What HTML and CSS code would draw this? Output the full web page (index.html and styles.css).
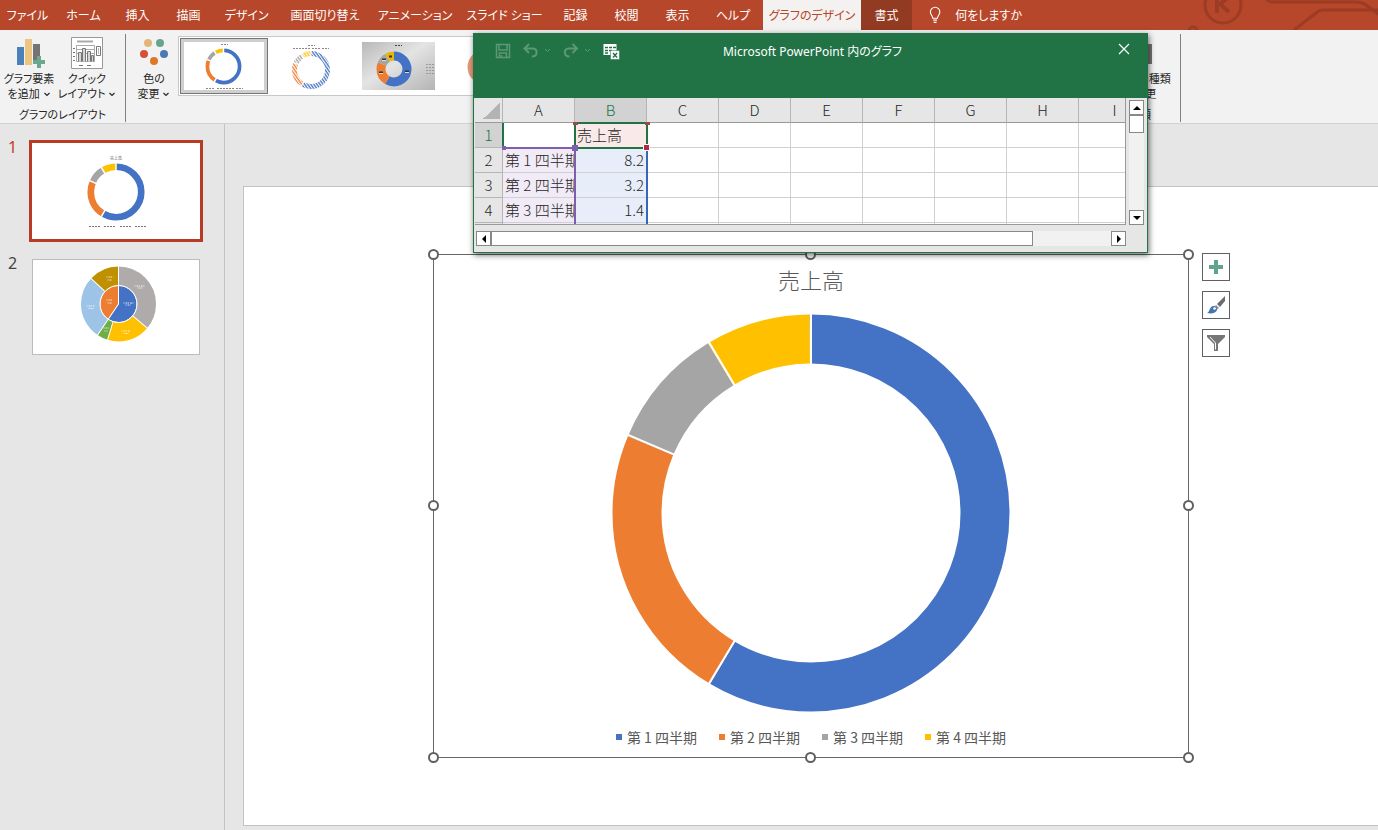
FILE: index.html
```html
<!DOCTYPE html>
<html lang="ja">
<head>
  <meta charset="UTF-8">
  <title>グラフのデザイン</title>
  <link rel="stylesheet" href="styles.css">
</head>
<body>
  <!-- shared drawings -->
  <svg class="defs" aria-hidden="true">
    <symbol id="ring" viewBox="-100 -100 200 200" overflow="visible">
      <g fill="none" transform="rotate(-90)">
        <circle r="87" pathLength="140" stroke="#4472c4" stroke-dasharray="82 58"/>
        <circle r="87" pathLength="140" stroke="#ed7d31" stroke-dasharray="32 108" stroke-dashoffset="-82"/>
        <circle r="87" pathLength="140" stroke="#a5a5a5" stroke-dasharray="14 126" stroke-dashoffset="-114"/>
        <circle r="87" pathLength="140" stroke="#ffc000" stroke-dasharray="12 128" stroke-dashoffset="-128"/>
      </g>
    </symbol>
    <symbol id="cuts" viewBox="-100 -100 200 200" overflow="visible">
      <g stroke="#fff">
        <path d="M0-60V-102"/>
        <path d="M0-60V-102" transform="rotate(210.86)"/>
        <path d="M0-60V-102" transform="rotate(293.14)"/>
        <path d="M0-60V-102" transform="rotate(329.14)"/>
      </g>
    </symbol>
    <symbol id="down" viewBox="0 0 8 8"><path d="M1.500 3L4 5.500 6.500 3" fill="none" stroke="currentColor" stroke-width="1.2"/></symbol>
    <pattern id="hatch" width="2.500" height="2.500" patternUnits="userSpaceOnUse" patternTransform="rotate(-35)">
      <path d="M1 0V3" stroke="#fff" stroke-width="1.3"/>
    </pattern>
    <mask id="hatch-mask"><rect width="88" height="56" fill="url(#hatch)"/></mask>
    <linearGradient id="shade" x1="0" y1="0" x2="1" y2="1">
      <stop offset="0" stop-color="#b8b8b8"/><stop offset=".45" stop-color="#e4e4e4"/><stop offset="1" stop-color="#b4b4b4"/>
    </linearGradient>
  </svg>

  <div class="app">
    <nav class="tabs">
      <button>ファイル</button>
      <button>ホーム</button>
      <button>挿入</button>
      <button>描画</button>
      <button>デザイン</button>
      <button>画面切り替え</button>
      <button>アニメーション</button>
      <button>スライド ショー</button>
      <button>記録</button>
      <button>校閲</button>
      <button>表示</button>
      <button>ヘルプ</button>
      <button class="active">グラフのデザイン</button>
      <button class="context">書式</button>
      <button class="tell-me">
        <svg width="13" height="18" viewBox="0 0 13 18" fill="none" stroke="#fff" stroke-width="1.2"><path d="M4 12.500C4 10 1.500 9 1.500 5.800a5 5 0 0 1 10 0C11.500 9 9 10 9 12.500zM4.500 14.500h4M5 16.800h3"/></svg>
        何をしますか
      </button>
      <svg class="tabs-art" width="198" height="30" viewBox="0 0 198 30" fill="none" stroke="#9c3c24" stroke-width="3">
        <circle cx="43" cy="5" r="18"/>
        <path d="M37-2v15M49-3L40 4l9 8" stroke-width="4"/>
        <path d="M86-4c0 4 3 6 6 6h84q6 0 10 3l14 10M114 30l22-17q3-3 7-3h60M90 27M9 32c0-7 8-7 8 0"/>
      </svg>
    </nav>

    <header class="ribbon">
      <section class="group">
        <div class="tools">
          <button class="big">
            <svg width="32" height="34" viewBox="0 0 32 34"><path d="M4 11h7v18H4z" fill="#4c80b9"/><path d="M12 3h7v26h-7z" fill="#ecc680"/><path d="M20 8h7v14h-3v4h-4z" fill="#747474"/><path d="M24 20h4v4h4v4h-4v4h-4v-4h-4v-4h4z" fill="#6aa990"/></svg>
            <span>グラフ要素<br>を追加 <svg width="8" height="8"><use href="#down"/></svg></span>
          </button>
          <button class="big">
            <svg width="32" height="34" viewBox="0 0 32 34" fill="none" stroke="#777"><path d="M.5 1.500h31v31H.5z" fill="#fff" stroke="#999"/><path d="M6 5.500h16" stroke-width="2" stroke="#aaa"/><path d="M5.500 9.500h18v16h-18zM5.500 13.500h18M5.500 17.500h18" stroke="#aaa"/><path d="M2 12.500h2M2 16.500h2M2 20.500h2M2 24.500h2M8 29.500h4M16 29.500h4"/><path d="M7.500 25.500v-9h3v9M11.500 25.500v-13h3v13M16.500 25.500v-10h3v10M20.500 25.500v-6h2v6" fill="#d5d5d5"/><path d="M25.500 10.500h4v9h-4zM27 13h1M27 15h1M27 17h1"/></svg>
            <span>クイック<br>レイアウト <svg width="8" height="8"><use href="#down"/></svg></span>
          </button>
        </div>
        <div class="group-name">グラフのレイアウト</div>
      </section>
      <section class="group styles">
        <button class="big">
          <svg width="32" height="34" viewBox="0 0 32 34"><circle cx="10" cy="7" r="4" fill="#e4b676"/><circle cx="22" cy="7" r="4" fill="#66a48c"/><circle cx="6" cy="18" r="4" fill="#d4503b"/><circle cx="26" cy="18" r="4" fill="#4c78b5"/><circle cx="16" cy="25" r="4" fill="#dc7927"/></svg>
          <span>色の<br>変更 <svg width="8" height="8"><use href="#down"/></svg></span>
        </button>
        <div class="gallery">
          <button class="selected" aria-label="スタイル 1">
            <svg width="88" height="56" viewBox="0 0 88 56"><rect width="88" height="56" fill="#fff"/><use href="#ring" x="25" y="10" width="37" height="37" stroke-width="20"/><use href="#cuts" x="25" y="10" width="37" height="37" stroke-width="8"/><path d="M41 6.500h7M26 50.500h8M37 50.500h8M46 50.500h8M56 50.500h7" stroke="#888" stroke-dasharray="2 1"/></svg>
          </button>
          <button aria-label="スタイル 2">
            <svg width="88" height="56" viewBox="0 0 88 56"><g mask="url(#hatch-mask)"><use href="#ring" x="24" y="13" width="38" height="38" stroke-width="26"/></g><use href="#cuts" x="24" y="13" width="38" height="38" stroke-width="6"/><path d="M40 7.500h7M25 10.500h8M34 10.500h8M44 10.500h8M54 10.500h7" stroke="#888" stroke-dasharray="2 1"/></svg>
          </button>
          <button aria-label="スタイル 3">
            <svg width="88" height="56" viewBox="0 0 88 56"><rect x="6" y="4" width="73" height="48" fill="url(#shade)"/><g transform="translate(38 31)" fill="none"><g transform="rotate(-90)" stroke-width="9"><circle r="13" pathLength="140" stroke="#4472c4" stroke-dasharray="82 58"/><circle r="13" pathLength="140" stroke="#ed7d31" stroke-dasharray="32 108" stroke-dashoffset="-82"/><circle r="13" pathLength="140" stroke="#a5a5a5" stroke-dasharray="14 126" stroke-dashoffset="-114"/><circle r="13" pathLength="140" stroke="#e8b50a" stroke-dasharray="12 128" stroke-dashoffset="-128"/></g></g><path d="M39 7.500h7" stroke="#444" stroke-dasharray="2 1"/><path d="M23 34.500h4M26 21.500h4M33 18.500h3M49 33.500h4" stroke="#333" stroke-width="2"/><path d="M23 35.500h4M26 22.500h4M49 34.500h4" stroke="#ddd"/><path d="M70 26.500h8M70 29.500h8M70 32.500h8M70 35.500h8" stroke="#999" stroke-dasharray="2 1"/></svg>
          </button>
          <button aria-label="スタイル 4">
            <svg width="88" height="56" viewBox="0 0 88 56"><circle cx="41" cy="29" r="13" fill="none" stroke="#e59a76" stroke-width="9"/></svg>
          </button>
        </div>
      </section>
      <section class="group">
        <button class="big">
          <svg width="32" height="34" viewBox="0 0 32 34"><path d="M2 11h7v18H2z" fill="#4c80b9"/><path d="M10 3h7v26h-7z" fill="#ecc680"/><path d="M18 8h10v20H18z" fill="#747474"/></svg>
          <span>グラフの種類<br>の変更</span>
        </button>
        <div class="group-name">種類</div>
      </section>
    </header>

    <div class="workspace">
      <ol class="slides">
        <li class="current">
          <span class="num">1</span>
          <svg class="thumb" viewBox="0 0 168 96">
            <text x="84" y="17" font-size="4" text-anchor="middle" fill="#595959">売上高</text>
            <use href="#ring" x="55" y="20" width="58" height="58" stroke-width="23"/>
            <use href="#cuts" x="55" y="20" width="58" height="58" stroke-width="5"/>
            <path d="M57 83.500h11M72 83.500h11M88 83.500h11M103 83.500h11" stroke="#777" stroke-dasharray="2 1"/>
          </svg>
        </li>
        <li>
          <span class="num">2</span>
          <svg class="thumb" viewBox="0 0 168 96">
            <g transform="translate(86.500 45)">
              <g fill="none" transform="rotate(-90)">
                <g stroke-width="19">
                  <circle r="28" pathLength="360" stroke="#afabab" stroke-dasharray="130 230"/>
                  <circle r="28" pathLength="360" stroke="#ffc000" stroke-dasharray="67 293" stroke-dashoffset="-130"/>
                  <circle r="28" pathLength="360" stroke="#70ad47" stroke-dasharray="17 343" stroke-dashoffset="-197"/>
                  <circle r="28" pathLength="360" stroke="#9dc3e6" stroke-dasharray="99 261" stroke-dashoffset="-214"/>
                  <circle r="28" pathLength="360" stroke="#bf9000" stroke-dasharray="47 313" stroke-dashoffset="-313"/>
                </g>
                <g stroke-width="18">
                  <circle r="9" pathLength="360" stroke="#4472c4" stroke-dasharray="214 146"/>
                  <circle r="9" pathLength="360" stroke="#ed7d31" stroke-dasharray="146 214" stroke-dashoffset="-214"/>
                </g>
                <circle r="18.500" stroke="#fff"/>
                <path d="M0 0H38" stroke="#fff"/>
                <path d="M19 0H38" stroke="#fff" transform="rotate(130)"/>
                <path d="M19 0H38" stroke="#fff" transform="rotate(197)"/>
                <path d="M0 0H38" stroke="#fff" transform="rotate(214)"/>
                <path d="M19 0H38" stroke="#fff" transform="rotate(313)"/>
              </g>
              <path d="M16-18h10M19-16h5M5-1h10M7 1h5M-12-4h6M-11-1h4M-12-27h7M-11-24h4M-32 2h8M-30 4.500h5M3 27h9M5 29.500h5M-15 24h5M-14 27h3" stroke="#fff" stroke-dasharray="1 1 2 .5" opacity=".8"/>
            </g>
          </svg>
        </li>
      </ol>

      <main class="stage">
        <div class="slide">
          <div class="chart">
            <h1>売上高</h1>
            <svg class="donut" viewBox="-200 -200 400 400" role="img" aria-label="売上高">
              <use href="#ring" x="-200" y="-200" width="400" height="400" stroke-width="24.500"/>
              <use href="#cuts" x="-200" y="-200" width="400" height="400" stroke-width="1"/>
            </svg>
            <ul class="legend">
              <li class="q1">第 1 四半期</li>
              <li class="q2">第 2 四半期</li>
              <li class="q3">第 3 四半期</li>
              <li class="q4">第 4 四半期</li>
            </ul>
            <i class="handle top left"></i>
            <i class="handle top center"></i>
            <i class="handle top right"></i>
            <i class="handle middle left"></i>
            <i class="handle middle right"></i>
            <i class="handle bottom left"></i>
            <i class="handle bottom center"></i>
            <i class="handle bottom right"></i>
            <div class="chart-tools">
              <button aria-label="グラフ要素">
                <svg width="20" height="20" viewBox="0 0 20 20"><path d="M8 3h4v5h5v4h-5v5H8v-5H3V8h5z" fill="#5ea58b"/></svg>
              </button>
              <button aria-label="グラフ スタイル">
                <svg width="20" height="20" viewBox="0 0 20 20"><path d="M19 1v5l-5 6-3-3z" fill="#6b6b6b"/><path d="M10 10l3 3-1 1-3-3z" fill="#8a8a8a"/><path d="M1 18c3-1 2-6 6-7 3-.5 5 2 4 4-1 3-5 4-10 3z" fill="#4777ad"/><path d="M7 13c1-1 3-1 3 1l-2 1z" fill="#fff"/></svg>
              </button>
              <button aria-label="グラフ フィルター">
                <svg width="20" height="20" viewBox="0 0 20 20"><path d="M1 2h18v2l-7 7v7H8v-7L1 4z" fill="#777"/><path d="M4 4l5.500 6v6.500" fill="none" stroke="#fff"/></svg>
              </button>
            </div>
          </div>
        </div>
      </main>
    </div>
  </div>

  <div class="window">
    <div class="titlebar">
      <div class="quick">
        <svg width="16" height="16" viewBox="0 0 16 16" fill="none" stroke="#5c9876" stroke-width="1.500"><path d="M1.500 1.500h13v13h-13zM4 2v5h8V2M4.500 14v-4h7v4M6.500 14v-2"/></svg>
        <svg width="28" height="16" viewBox="0 0 28 16" fill="none" stroke="#5c9876"><path d="M6 1L1.500 5.500 6 10M2 5.500h8c5 0 5 8-1 8" stroke-width="2"/><path d="M22 6l2.500 2.500L27 6"/></svg>
        <svg width="28" height="16" viewBox="0 0 28 16" fill="none" stroke="#5c9876"><path d="M9.500 1L14 5.500 9.500 10M13.500 5.500h-8c-5 0-5 8 1 8" stroke-width="2"/><path d="M22 6l2.500 2.500L27 6"/></svg>
        <svg width="17" height="17" viewBox="0 0 17 17"><path d="M.5 1h13v11H.5z" fill="#fff"/><path d="M2 4.500h3M6 4.500h3M10 4.500h3M2 7.500h3M6 7.500h3M2 10h3" stroke="#217346" stroke-width="1.500"/><path d="M7.500 7.500h9v9h-9z" fill="#fff" stroke="#217346" stroke-width=".5"/><path d="M10 10l4 4.500M14 10l-4 4.500" stroke="#217346" stroke-width="1.400"/></svg>
      </div>
      <h2>Microsoft PowerPoint 内のグラフ</h2>
      <button class="close" aria-label="閉じる">
        <svg width="12" height="12" viewBox="0 0 12 12"><path d="M1 1l10 10M11 1L1 11" stroke="#fff" stroke-width="1.200"/></svg>
      </button>
    </div>

    <div class="sheet">
      <div class="cells">
        <table>
          <thead>
            <tr><th class="corner"></th><th>A</th><th class="on">B</th><th>C</th><th>D</th><th>E</th><th>F</th><th>G</th><th>H</th><th>I</th></tr>
          </thead>
          <tbody>
            <tr><th class="on">1</th><td></td><td class="name">売上高</td><td></td><td></td><td></td><td></td><td></td><td></td><td></td></tr>
            <tr><th>2</th><td class="cat">第 1 四半期</td><td class="val">8.2</td><td></td><td></td><td></td><td></td><td></td><td></td><td></td></tr>
            <tr><th>3</th><td class="cat">第 2 四半期</td><td class="val">3.2</td><td></td><td></td><td></td><td></td><td></td><td></td><td></td></tr>
            <tr><th>4</th><td class="cat">第 3 四半期</td><td class="val">1.4</td><td></td><td></td><td></td><td></td><td></td><td></td><td></td></tr>
            <tr><th></th><td class="cat"></td><td class="val"></td><td></td><td></td><td></td><td></td><td></td><td></td><td></td></tr>
          </tbody>
        </table>
        <!-- range borders over the cells -->
        <svg class="ranges" width="180" height="127" viewBox="0 0 180 127" fill="none" stroke-width="2">
          <path d="M28 25v25" stroke="#217346"/>
          <path d="M28 50h72v77" stroke="#7d60a9"/>
          <path d="M172 50v77" stroke="#3a67b5"/>
          <path d="M100 25h72v25h-72z" stroke="#217346"/>
          <path d="M98 24h5v3h-5zM170 24h5v3h-5z" fill="#9b4b45" stroke="none"/>
          <path d="M97 47h6v6h-6zM27 48h4v4h-4z" fill="#7d60a9" stroke="none"/>
          <path d="M168.500 46.500h6v6h-6z" fill="#b02b43" stroke="#fff" stroke-width="1"/>
        </svg>
      </div>
      <div class="vscroll">
        <button aria-label="上へ"><svg width="8" height="8" viewBox="0 0 8 8"><path d="M0 6l4-4 4 4z"/></svg></button>
        <span class="grip"></span>
        <button aria-label="下へ"><svg width="8" height="8" viewBox="0 0 8 8"><path d="M0 2l4 4 4-4z"/></svg></button>
      </div>
      <div class="hscroll">
        <button aria-label="左へ"><svg width="8" height="8" viewBox="0 0 8 8"><path d="M6 0L2 4l4 4z"/></svg></button>
        <span class="grip"></span>
        <button aria-label="右へ"><svg width="8" height="8" viewBox="0 0 8 8"><path d="M2 0l4 4-4 4z"/></svg></button>
      </div>
    </div>
  </div>
</body>
</html>
```

FILE: styles.css
```css
* {
  box-sizing: border-box;
}
body {
  margin: 0;
  font-family: "Noto Sans", "Noto Sans CJK JP", sans-serif;
  font-size: 12px;
  color: #262626;
  background: #e6e6e6;
  overflow: hidden;
}
button {
  border: 0;
  padding: 0;
  background: none;
  color: inherit;
  font: inherit;
}
h1, h2, ul, ol {
  margin: 0;
  padding: 0;
  font-weight: normal;
  list-style: none;
}
.defs {
  position: absolute;
  width: 0;
  height: 0;
}
.app {
  display: grid;
  grid-template-rows: 30px 94px 1fr;
  min-height: 100vh;
}

/* tabs */
.tabs {
  display: grid;
  grid-template-columns: 55px 57px 51px 51px 65px 92px 88px 91px 51px 51px 51px 60px 98px 51px 110px 1fr;
  background: #b7472a;
  color: #fff;
  font-feature-settings: "palt";
}
.tabs button {
  white-space: nowrap;
}
.tabs .active {
  background: #f3f2f1;
  color: #b7472a;
}
.tabs .context {
  background: #933a22;
}
.tabs .tell-me {
  display: flex;
  align-items: center;
  gap: 14px;
  padding-left: 17px;
}
.tabs-art {
  justify-self: end;
}

/* ribbon */
.ribbon {
  display: grid;
  grid-template-columns: 126px 974px 81px;
  padding: 4px 0;
  background: #f2f2f2;
  border-bottom: 1px solid #d2d2d2;
  font-size: 11px;
  line-height: 15px;
  font-feature-settings: "palt";
}
.group {
  display: flex;
  flex-direction: column;
  border-right: 1px solid #808080;
}
.group.styles {
  flex-direction: row;
  align-items: flex-start;
  border-right: 0;
}
.tools {
  display: flex;
}
.big {
  display: flex;
  flex-direction: column;
  align-items: center;
  width: 58px;
  padding-top: 2px;
  white-space: nowrap;
}
.big > span {
  margin-top: 1px;
}
.group > .big {
  align-self: center;
}
.styles > .big {
  align-self: flex-start;
  width: 52px;
  padding-left: 4px;
}
.group-name {
  margin-top: 6px;
  text-align: center;
}
.gallery {
  display: flex;
  flex: 1;
  margin-top: 2px;
  height: 60px;
  padding: 1px;
  border: 1px solid #c8c8c8;
  background: #fff;
  overflow: hidden;
}
.gallery button {
  flex: none;
  width: 88px;
  height: 56px;
}
.gallery svg {
  display: block;
}
.gallery .selected {
  outline: 1px solid #777;
  outline-offset: -1px;
  border: 4px solid #cfcfcf;
}
.selected svg {
  margin: -4px;
  clip-path: inset(4px);
}

/* slide list */
.workspace {
  display: grid;
  grid-template-columns: 225px 1fr;
}
.slides {
  display: flex;
  flex-direction: column;
  gap: 14px;
  padding-top: 16px;
  border-right: 1px solid #c3c3c3;
}
.slides li {
  display: flex;
}
.num {
  width: 29px;
  padding-left: 8px;
  font-size: 16px;
  line-height: 14px;
  color: #444;
}
.thumb {
  width: 174px;
  height: 102px;
  border: 3px solid transparent;
  outline: 1px solid #bbb;
  outline-offset: -4px;
  background: #fff padding-box;
}
.current .num {
  color: #c43e1c;
}
.current .thumb {
  border-color: #b83b24;
  outline: 0;
}

/* slide */
.stage {
  padding: 62px 0 4px 18px;
}
.slide {
  padding: 67px 189px;
  border: 1px solid #c3c3c3;
  border-right: 0;
  background: #fff;
}
.chart {
  position: relative;
  display: flex;
  flex-direction: column;
  align-items: center;
  padding: 10px 0;
  border: 1px solid #666;
  color: #595959;
  font-family: "Noto Sans CJK JP", sans-serif;
  font-weight: 300;
}
.chart h1 {
  font-size: 22px;
  font-weight: 300;
  line-height: 28px;
}
.donut {
  width: 400px;
  margin: 20px 0 14px;
}
.legend {
  display: flex;
  gap: 22px;
  font-size: 14px;
  line-height: 20px;
}
.legend li {
  display: flex;
  align-items: center;
  gap: 5px;
}
.legend li::before {
  content: "";
  width: 6px;
  height: 6px;
  background: #4472c4;
}
.legend .q2::before {
  background: #ed7d31;
}
.legend .q3::before {
  background: #a5a5a5;
}
.legend .q4::before {
  background: #ffc000;
}
.handle {
  position: absolute;
  width: 11px;
  height: 11px;
  margin: -6px;
  border: 2px solid #606060;
  border-radius: 50%;
  background: #fff;
}
.top { top: 0; }
.middle { top: 50%; }
.bottom { bottom: 0; }
.left { left: 0; }
.center { left: 50%; }
.right { right: 0; }
.chart-tools {
  position: absolute;
  left: 100%;
  top: -2px;
  display: grid;
  gap: 10px;
  margin-left: 14px;
}
.chart-tools button {
  display: grid;
  place-items: center;
  width: 28px;
  height: 28px;
  border: 1px solid #606060;
  background: #fff;
}

/* data window */
.window {
  position: absolute;
  left: 473px;
  top: 33px;
  width: 675px;
  border: 1px solid #217346;
  background: #e6e6e6;
  box-shadow: 1px 2px 6px rgba(0, 0, 0, 0.6);
}
.titlebar {
  display: grid;
  grid-template-columns: 1fr auto 1fr;
  height: 64px;
  padding: 9px 17px 0 21px;
  background: #217346;
  color: #fff;
}
.quick {
  display: flex;
  gap: 12px;
}
.titlebar h2 {
  font-size: 12px;
  line-height: 18px;
  font-feature-settings: "palt";
}
.close {
  justify-self: end;
  align-self: start;
}
.close svg {
  display: block;
}
.sheet {
  display: grid;
  grid-template-columns: 1fr 15px;
  gap: 6px 3px;
  padding: 0 3px 6px 1px;
}
.cells {
  position: relative;
  height: 127px;
  overflow: hidden;
  border-right: 1px solid #999;
  border-bottom: 1px solid #999;
  font-family: "Noto Sans CJK JP", sans-serif;
  font-weight: 300;
  font-size: 15px;
}
.cells table {
  width: 676px;
  table-layout: fixed;
  border-collapse: separate;
  border-spacing: 0;
}
.cells th {
  height: 25px;
  padding: 0;
  border: solid #b5b5b5;
  border-width: 0 1px 1px 0;
  background: #e6e6e6;
  font-weight: 300;
  line-height: 24px;
}
.cells thead th {
  line-height: 22px;
  border-bottom-color: #999;
}
.cells .corner {
  width: 28px;
  background: linear-gradient(135deg, transparent 50%, #b3b3b3 50%) 8px 4px / 17px 17px no-repeat #e6e6e6;
}
.cells .on {
  background: #d2d2d2;
  color: #217346;
}
.cells td {
  height: 25px;
  padding: 0 2px;
  border: solid #d0d0d0;
  border-width: 0 1px 1px 0;
  background: #fff;
  line-height: 22px;
  white-space: nowrap;
  overflow: hidden;
}
.cells .name {
  background: #fae9e9;
}
.cells .cat {
  background: #f0ebf6;
}
.cells .val {
  background: #e7eef9;
  text-align: right;
}
.ranges {
  position: absolute;
  left: 0;
  top: 0;
}
.vscroll, .hscroll {
  display: flex;
  background: #f1f1f1;
}
.vscroll {
  flex-direction: column;
  margin-top: 2px;
}
.vscroll button, .hscroll button, .grip {
  flex: none;
  width: 15px;
  height: 15px;
  border: 1px solid #888;
  background: #fff;
}
.vscroll button, .hscroll button {
  display: grid;
  place-items: center;
}
.vscroll .grip {
  height: 18px;
  margin-bottom: auto;
}
.hscroll {
  margin-left: 1px;
}
.hscroll .grip {
  flex: 0 1 542px;
  margin-right: auto;
}
```
